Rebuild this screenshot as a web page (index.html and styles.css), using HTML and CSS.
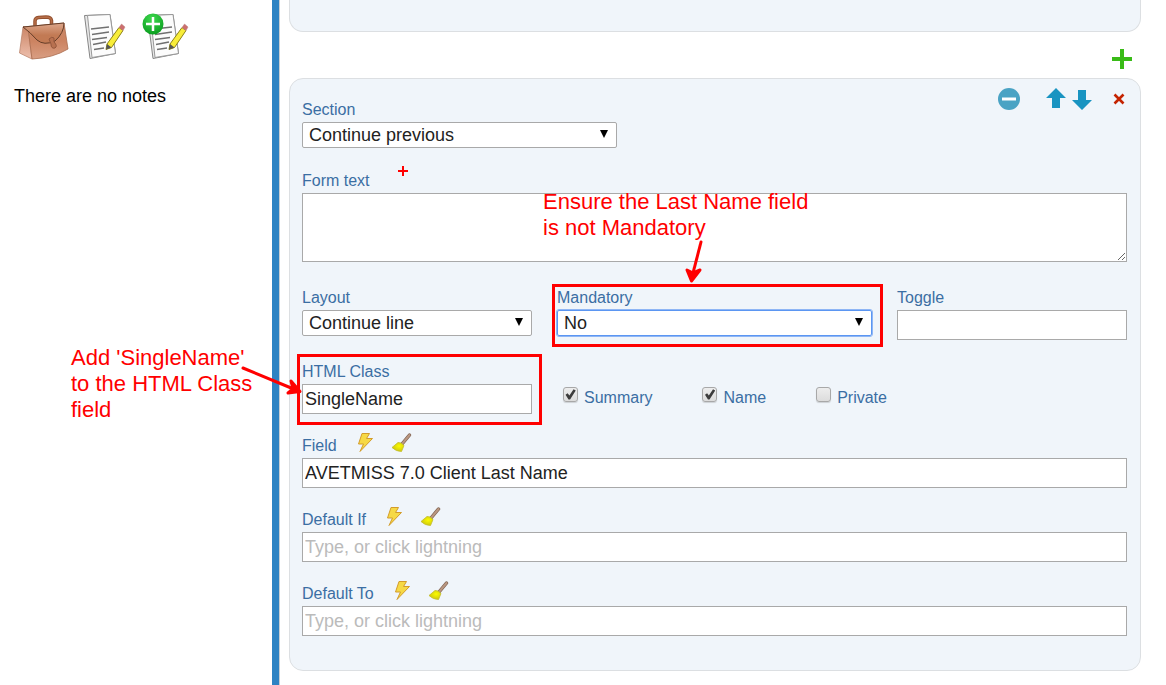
FILE: index.html
```html
<!DOCTYPE html>
<html lang="en">
<head>
  <meta charset="UTF-8" />
  <meta name="viewport" content="width=device-width, initial-scale=1.0" />
  <title>Form Designer</title>
  <link rel="stylesheet" href="styles.css">
</head>
<body>
  <!-- shared icons -->
  <svg class="sprite" width="0" height="0" aria-hidden="true">
    <defs>
      <linearGradient id="leather" x1="0" y1="0" x2="0" y2="1">
        <stop offset="0" stop-color="#c88767" />
        <stop offset="0.5" stop-color="#cc8361" />
        <stop offset="1" stop-color="#d99e83" />
      </linearGradient>
      <linearGradient id="leatherFlap" x1="0" y1="0" x2="0" y2="1">
        <stop offset="0" stop-color="#dda78c" />
        <stop offset="0.600" stop-color="#c27a54" />
      </linearGradient>
      <linearGradient id="leatherSide" x1="0" y1="0" x2="0" y2="1">
        <stop offset="0" stop-color="#cb8566" />
        <stop offset="1" stop-color="#eec0ae" />
      </linearGradient>
      <radialGradient id="greenBall" cx="0.45" cy="0.25" r="0.8">
        <stop offset="0" stop-color="#3fd94f" />
        <stop offset="1" stop-color="#079a1c" />
      </radialGradient>
      <radialGradient id="bristle" cx="0.6" cy="0.4" r="0.7">
        <stop offset="0" stop-color="#fbfb00" />
        <stop offset="1" stop-color="#c6bf10" />
      </radialGradient>
    </defs>
    <symbol id="page" viewBox="0 0 48 50">
      <path d="M3.500 5.500 L29 4.500 L34.500 43.500 L9 48.500 Z" fill="#e9e9e9" stroke="#868686" />
      <path d="M6.500 5.500 L29 4.500 L34.500 43.500 L11 47.500 Z" fill="#fcfcfc" stroke="#999" />
      <path d="M10 19 L28 17 M11 24.500 L28 22 M11 29.500 L26 27.500 M12 34.500 L25 32 M13 39.500 L23 38" stroke="#707070" stroke-width="1.500" fill="none" />
      <path d="M26 34 L38 17.500 L42 20.500 L30.500 37.500 L25 39.500 Z" fill="#f8ed39" stroke="#8e8314" />
      <path d="M38 17.500 L40.500 14 L44 17 L42 20.500 Z" fill="#cc6f6f" stroke="#b98080" stroke-width="0.500" />
      <path d="M26 34 L30.500 37.500 L25 39.500 Z" fill="#555" />
    </symbol>
    <symbol id="bolt" viewBox="0 0 24 24">
      <path d="M8 2.500 H15.500 L12.500 7.500 H18.500 L6 20.500 L9.500 13 H4.500 Z" fill="#f6d945" stroke="#d39c2a" />
    </symbol>
    <symbol id="broom" viewBox="0 0 24 24">
      <path d="M12 13 L19.500 4" stroke="#7d6150" stroke-width="3.500" stroke-linecap="round" />
      <path d="M12 13 L19.500 4" stroke="#ba9781" stroke-width="2" stroke-linecap="round" />
      <path d="M8 11.500 Q11 11 14 14.500 L11.500 20.500 Q6 20.500 2 16.500 Z" fill="url(#bristle)" stroke="#c3bd2b" stroke-width="0.800" stroke-linejoin="round" />
    </symbol>
  </svg>

  <div class="layout">
    <aside class="sidebar">
      <div class="note-tools">
        <button type="button" class="icon-btn" aria-label="Briefcase">
          <svg width="52" height="50" viewBox="0 0 52 50">
            <path d="M17 16 V11 Q17 8 20.500 7.500 L28 7 Q33 7 33.500 10.500 V15" fill="none" stroke="#94502e" stroke-width="3.500" />
            <path d="M17 16 V11 Q17 8 20.500 7.500 L28 7 Q33 7 33.500 10.500 V15" fill="none" stroke="#b56d48" stroke-width="1.500" />
            <path d="M5 17 L1.500 43 L14 49 L10 18 Z" fill="url(#leatherSide)" stroke="#bd876f" stroke-width="0.800" />
            <path d="M5 17 L46 13 L50 39 Q35 48 14 49 L10 18 Z" fill="url(#leather)" stroke="#a96b4d" stroke-width="0.800" />
            <path d="M5 17 L46 13 Q46 23 37 31 Q26 36 19 30 Q12 22 5 17 Z" fill="url(#leatherFlap)" stroke="#653d28" />
            <path d="M31 29 Q34 26 36 28 V32 Q40 36 37 38 Q33 39 33 34 Z" fill="#b87150" stroke="#94573c" />
          </svg>
        </button>
        <button type="button" class="icon-btn" aria-label="Notes">
          <svg width="48" height="50"><use href="#page" /></svg>
        </button>
        <button type="button" class="icon-btn" aria-label="Add note">
          <svg width="52" height="50" viewBox="0 0 52 50">
            <use href="#page" x="4" y="0" width="48" height="50" />
            <circle cx="13" cy="14" r="10.500" fill="url(#greenBall)" />
            <path d="M13 7 V21 M6 14 H20" stroke="#fff" stroke-width="2.500" />
          </svg>
        </button>
      </div>
      <p class="no-notes">There are no notes</p>
    </aside>

    <main class="designer">
      <div class="card card-previous"></div>

      <div class="add-row">
        <button type="button" class="icon-btn" aria-label="Add field">
          <svg width="20" height="20" viewBox="0 0 20 20"><path d="M10 0 V20 M0 10 H20" stroke="#39bb17" stroke-width="4" /></svg>
        </button>
      </div>

      <form class="card">
        <div class="card-head">
          <div class="field section-field">
            <div class="label-row"><label for="section">Section</label></div>
            <div class="select-wrap">
              <select id="section"><option>Continue previous</option></select>
            </div>
          </div>
          <div class="card-tools">
            <button type="button" class="icon-btn collapse" aria-label="Collapse">
              <svg width="22" height="22" viewBox="0 0 22 22"><circle cx="11" cy="11" r="11" fill="#4aa3c4" /><path d="M4 11 H18" stroke="#fff" stroke-width="3" /></svg>
            </button>
            <button type="button" class="icon-btn" aria-label="Move up">
              <svg width="20" height="22" viewBox="0 0 20 22"><path d="M10 0 L20 10 H14 V20 H6 V10 H0 Z" fill="#1994c1" /></svg>
            </button>
            <button type="button" class="icon-btn" aria-label="Move down">
              <svg width="20" height="22" viewBox="0 0 20 22"><path d="M6 2 H14 V12 H20 L10 22 L0 12 H6 Z" fill="#1994c1" /></svg>
            </button>
            <button type="button" class="icon-btn delete" aria-label="Delete">
              <svg width="12" height="12" viewBox="0 0 12 12"><path d="M1.500 1.500 L10.500 10.500 M10.500 1.500 L1.500 10.500" stroke="#c42300" stroke-width="2.600" /></svg>
            </button>
          </div>
        </div>

        <div class="field">
          <div class="label-row">
            <label for="formText">Form text</label>
            <button type="button" class="icon-btn add-text" aria-label="Add text">
              <svg width="10" height="10" viewBox="0 0 10 10"><path d="M5 0 V10 M0 5 H10" stroke="#f00" stroke-width="2" /></svg>
            </button>
          </div>
          <textarea id="formText"></textarea>
        </div>

        <div class="columns">
          <div class="field">
            <div class="label-row"><label for="layout">Layout</label></div>
            <div class="select-wrap">
              <select id="layout"><option>Continue line</option></select>
            </div>
          </div>
          <div class="field">
            <div class="label-row"><label for="mandatory">Mandatory</label></div>
            <div class="select-wrap">
              <select id="mandatory" class="active"><option>No</option></select>
            </div>
            <div class="callout callout-mandatory"></div>
            <p class="hint hint-mandatory">Ensure the Last Name field<br>is not Mandatory</p>
            <svg class="arrow arrow-mandatory" width="20" height="46" viewBox="0 0 20 46">
              <path d="M16 3 L7 38" stroke="#f00" stroke-width="3" stroke-linecap="round" />
              <path d="M2 31 L6.500 42 L15 31 L8 34 Z" fill="#f00" stroke="#f00" stroke-width="3" stroke-linejoin="round" />
            </svg>
          </div>
          <div class="field">
            <div class="label-row"><label for="toggle">Toggle</label></div>
            <input type="text" id="toggle">
          </div>
        </div>

        <div class="columns">
          <div class="field">
            <div class="label-row"><label for="htmlClass">HTML Class</label></div>
            <input type="text" id="htmlClass" value="SingleName">
            <div class="callout callout-class"></div>
            <p class="hint hint-class">Add 'SingleName'<br>to the HTML Class<br>field</p>
            <svg class="arrow arrow-class" width="64" height="36" viewBox="0 0 64 36">
              <path d="M3 5 L56 27" stroke="#f00" stroke-width="3" stroke-linecap="round" />
              <path d="M51 18 L60 28.500 L48 30 L53 26 Z" fill="#f00" stroke="#f00" stroke-width="3" stroke-linejoin="round" />
            </svg>
          </div>
          <div class="checks">
            <div class="check"><input type="checkbox" id="summary" checked><label for="summary">Summary</label></div>
            <div class="check"><input type="checkbox" id="name" checked><label for="name">Name</label></div>
            <div class="check"><input type="checkbox" id="private"><label for="private">Private</label></div>
          </div>
        </div>

        <div class="field">
          <div class="label-row">
            <label for="field">Field</label>
            <button type="button" class="icon-btn bolt" aria-label="Choose field"><svg width="24" height="24"><use href="#bolt" /></svg></button>
            <button type="button" class="icon-btn" aria-label="Clear field"><svg width="24" height="24"><use href="#broom" /></svg></button>
          </div>
          <input type="text" id="field" value="AVETMISS 7.0 Client Last Name">
        </div>

        <div class="field">
          <div class="label-row">
            <label for="defaultIf">Default If</label>
            <button type="button" class="icon-btn bolt" aria-label="Choose default if"><svg width="24" height="24"><use href="#bolt" /></svg></button>
            <button type="button" class="icon-btn" aria-label="Clear default if"><svg width="24" height="24"><use href="#broom" /></svg></button>
          </div>
          <input type="text" id="defaultIf" placeholder="Type, or click lightning">
        </div>

        <div class="field">
          <div class="label-row">
            <label for="defaultTo">Default To</label>
            <button type="button" class="icon-btn bolt" aria-label="Choose default to"><svg width="24" height="24"><use href="#bolt" /></svg></button>
            <button type="button" class="icon-btn" aria-label="Clear default to"><svg width="24" height="24"><use href="#broom" /></svg></button>
          </div>
          <input type="text" id="defaultTo" placeholder="Type, or click lightning">
        </div>
      </form>
    </main>
  </div>
</body>
</html>
```
FILE: styles.css
```css
:root {
  --bar-color: #2e83c3;
  --card-bg: #f0f5fa;
  --card-border: #dcdfe2;
  --label-color: #3b6ea3;
  --control-border: #a9a9a9;
  --hint-color: #f00;
}

* {
  margin: 0;
  padding: 0;
  box-sizing: border-box;
}

body {
  font-family: Arial, "Liberation Sans", sans-serif;
  font-size: 18px;
  color: #000;
  background: #fff;
}

.sprite {
  position: absolute;
}

.layout {
  display: flex;
  min-height: 100vh;
}

/* Sidebar */
.sidebar {
  flex: 0 0 280px;
  padding: 10px 14px;
  border-right: 1px solid #c9ced3;
  box-shadow: inset -7px 0 0 var(--bar-color);
}

.note-tools {
  display: flex;
  gap: 11px;
  padding-left: 4px;
}

.no-notes {
  margin-top: 26px;
  line-height: 20px;
}

.icon-btn {
  display: block;
  flex: none;
  border: none;
  background: none;
  cursor: pointer;
}

.icon-btn svg {
  display: block;
}

/* Designer */
.designer {
  flex: 1;
  min-width: 0;
  padding: 0 25px 14px 9px;
}

.card {
  display: flex;
  flex-direction: column;
  gap: 20px;
  padding: 9px 13px 34px 12px;
  background: var(--card-bg);
  border: 1px solid var(--card-border);
  border-radius: 14px;
}

.card-previous {
  height: 32px;
  padding: 0;
  border-top: none;
  border-radius: 0 0 14px 14px;
}

.add-row {
  display: flex;
  justify-content: flex-end;
  padding: 17px 9px 9px;
}

.card-head {
  display: flex;
  justify-content: space-between;
  align-items: flex-start;
}

.section-field {
  flex: 0 1 315px;
  padding-top: 10px;
}

.card-tools {
  display: flex;
  align-items: center;
  gap: 6px;
  padding-right: 2px;
}

.collapse {
  margin-right: 20px;
}

.delete {
  margin-left: 15px;
}

/* Fields */
.field {
  position: relative;
  min-width: 0;
}

.label-row {
  display: flex;
  align-items: flex-start;
  gap: 12px;
  height: 24px;
}

label {
  font-size: 16px;
  line-height: 24px;
  color: var(--label-color);
}

.label-row .icon-btn {
  margin-top: -3px;
}

.label-row .add-text {
  margin-left: 16px;
}

.label-row .bolt {
  margin-left: 5px;
}

input[type="text"],
select,
textarea {
  display: block;
  width: 100%;
  font: inherit;
  color: #222;
  background: #fff;
  border: 1px solid var(--control-border);
  border-radius: 0;
}

input[type="text"] {
  height: 30px;
  padding: 0 2px;
}

input::placeholder {
  color: #bbb;
}

textarea {
  height: 69px;
  margin-bottom: 4px;
  padding: 2px;
  resize: vertical;
}

.select-wrap {
  position: relative;
  margin-bottom: 1px;
}

.select-wrap::after {
  content: "";
  position: absolute;
  top: 8px;
  right: 9px;
  width: 8px;
  height: 8px;
  background: #000;
  clip-path: polygon(0 0, 100% 0, 50% 100%);
  pointer-events: none;
}

select {
  appearance: none;
  height: 26px;
  padding: 0 24px 0 6px;
  border-radius: 2px;
}

select.active {
  border-color: #5b96f2;
  outline: 1px solid #8fb6f5;
}

.columns {
  display: grid;
  grid-template-columns: 230fr 315fr 230fr;
  gap: 25px;
}

.checks {
  grid-column: span 2;
  display: flex;
  gap: 50px;
  padding: 26px 0 0 6px;
}

.check {
  display: flex;
  align-items: flex-start;
  gap: 6px;
}

input[type="checkbox"] {
  appearance: none;
  position: relative;
  width: 15px;
  height: 15px;
  margin-top: 1px;
  border: 1px solid #a8a8a8;
  border-radius: 3px;
  background: linear-gradient(#ededed, #dcdcdc);
  box-shadow: 0 1px 1px rgba(0, 0, 0, 0.15);
}

input[type="checkbox"]:checked::after {
  content: "";
  position: absolute;
  inset: 1px;
  background: #3c3c3c;
  clip-path: polygon(5% 52%, 24% 38%, 40% 58%, 78% 2%, 98% 14%, 46% 96%, 32% 96%);
}

/* Callouts drawn over the form */
.callout,
.hint,
.arrow {
  position: absolute;
  pointer-events: none;
}

.callout {
  border: 3px solid var(--hint-color);
}

.callout-mandatory {
  inset: -2px -11px -7px -5px;
}

.callout-class {
  inset: -6px -10px -11px -5px;
}

.hint {
  font-size: 22px;
  line-height: 26px;
  color: var(--hint-color);
  white-space: nowrap;
}

.hint-mandatory {
  top: -97px;
  left: -14px;
}

.hint-class {
  top: -15px;
  left: -231px;
}

.arrow-mandatory {
  top: -47px;
  left: 128px;
}

.arrow-class {
  top: 3px;
  left: -62px;
}
```
